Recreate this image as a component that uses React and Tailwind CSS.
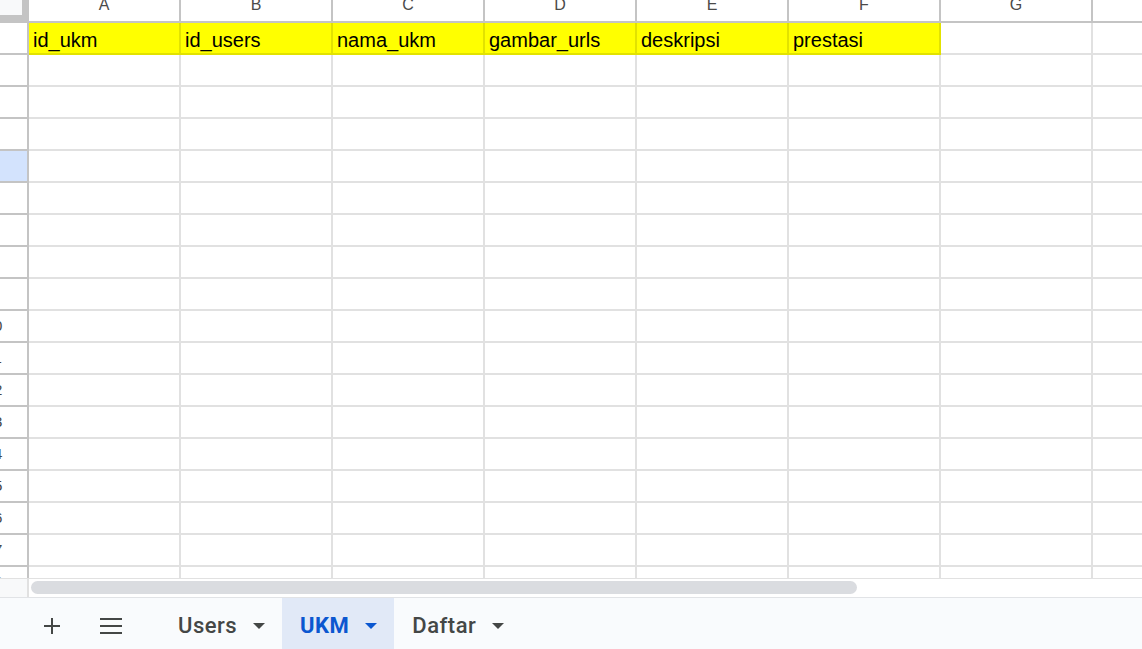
import React from "react"

const cols = ["A", "B", "C", "D", "E", "F", "G", "H"]
const headers = ["id_ukm", "id_users", "nama_ukm", "gambar_urls", "deskripsi", "prestasi"]
const rows = Array.from({ length: 18 }, (_, i) => i + 1)

function Caret({ color }) {
    return <svg width="12" height="6" viewBox="0 0 12 6" className="shrink-0">
        <path d="M0 0 L12 0 L6 6 Z" fill={color} />
    </svg>
}

function Tab({ label, active }) {
    return <div className={"flex h-full items-center gap-[16px] pl-[18px] pr-[17px] pt-[4px] " + (active ? "bg-[#e1e9f7]" : "")}>
        <span className={"text-[22px] tracking-[0.5px] " + (active ? "font-bold text-[#0b57d0]" : "font-medium text-[#444746]")}>{label}</span>
        <Caret color={active ? "#0b57d0" : "#444746"} />
    </div>
}

export default function App() {
    return <div className="flex h-[649px] w-[1142px] flex-col overflow-hidden bg-white font-['Liberation_Sans',Arial,sans-serif]">
        {/* grid */}
        <div className="h-[578px] shrink-0 overflow-hidden">
            <div className="flex h-[23px]">
                <div className="w-[29px] shrink-0 bg-[#c4c4c4]">
                    <div className="h-[15px] w-[22px] bg-[#f8f9fa]" />
                </div>
                {cols.map(c => <div key={c} className="flex w-[152px] shrink-0 justify-center overflow-hidden border-b-2 border-r-2 border-[#c4c4c4] bg-white">
                    <span className="mt-[-3px] text-[16px] leading-[16px] text-[#4a4a4a]">{c}</span>
                </div>)}
            </div>
            {rows.map(r => <div key={r} className="flex h-[32px]">
                <div className={"flex w-[29px] shrink-0 items-center overflow-hidden border-b-2 border-r-2 border-[#c4c4c4] " + (r === 5 ? "bg-[#d3e3fd]" : "bg-white")}>
                    <div className="ml-[-33px] w-[54px] shrink-0 text-center text-[15px] leading-[16px] text-[#444746]">{r}</div>
                </div>
                {cols.map((c, i) => {
                    const yellow = r === 1 && i < headers.length
                    return <div key={c} className={"flex w-[152px] shrink-0 items-end overflow-hidden border-b-2 border-r-2 pb-[1px] pl-[4px] " + (yellow ? "border-[#e2e200] bg-[#ffff00]" : "border-[#e1e1e1] bg-white")}>
                        {yellow && <span className="text-[20px] leading-[23px] text-black">{headers[i]}</span>}
                    </div>
                })}
            </div>)}
        </div>

        {/* horizontal scrollbar */}
        <div className="flex h-[19px] shrink-0 border-t border-[#e1e1e1] bg-white">
            <div className="w-[29px] shrink-0 border-r-2 border-[#e1e1e1] bg-[#f8f9fa]" />
            <div className="ml-[2px] mt-[2px] h-[13px] w-[826px] rounded-full bg-[#dadce0]" />
        </div>

        {/* sheet tabs */}
        <div className="flex h-[52px] shrink-0 items-center border-t border-[#e1e3e6] bg-[#f9fbfd] font-['Roboto',sans-serif]">
            <svg width="16" height="16" viewBox="0 0 16 16" className="ml-[44px] mt-[4px] shrink-0">
                <path d="M8 0 V16 M0 8 H16" stroke="#444746" strokeWidth="2" />
            </svg>
            <svg width="22" height="16" viewBox="0 0 22 16" className="ml-[40px] mt-[4px] shrink-0">
                <path d="M0 1 H22 M0 8 H22 M0 15 H22" stroke="#444746" strokeWidth="2" />
            </svg>
            <div className="ml-[38px] flex h-full items-center">
                <Tab label="Users" />
                <Tab label="UKM" active />
                <Tab label="Daftar" />
            </div>
        </div>
    </div>
}
